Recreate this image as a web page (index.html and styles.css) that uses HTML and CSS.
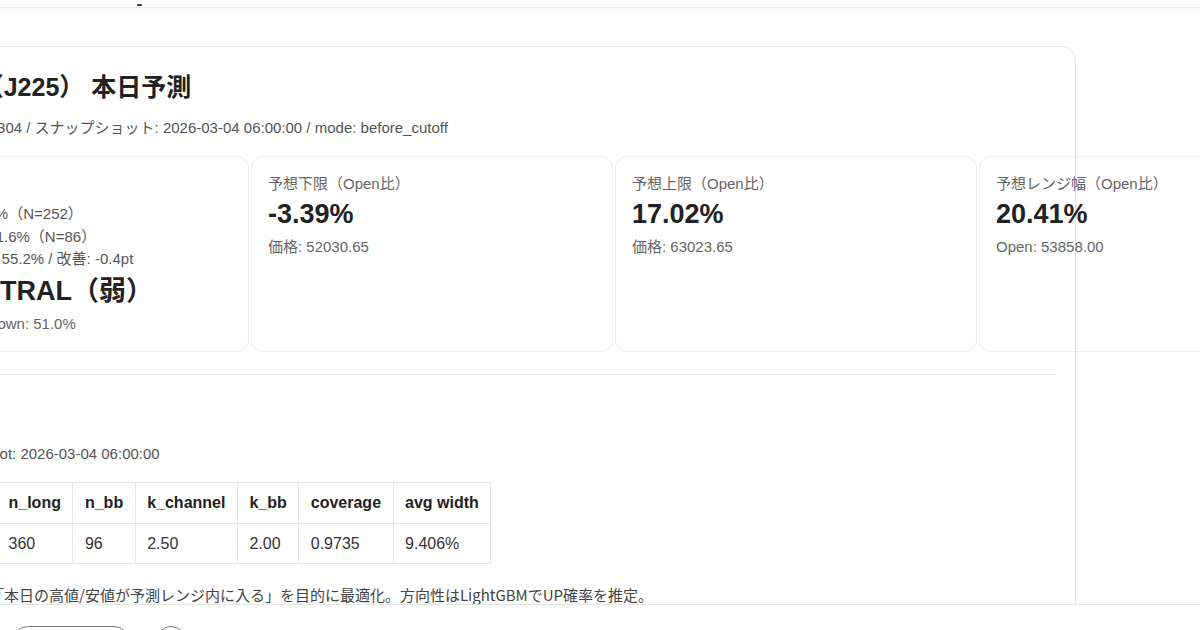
FILE: index.html
```html
<!DOCTYPE html>
<html lang="ja">
<head>
<meta charset="utf-8">
<title>本日予測</title>
<link rel="stylesheet" href="styles.css">
</head>
<body>
<header class="topbar"><span class="topbar-mark"></span></header>
<main class="card">
  <h1 class="title">日経225（J225） 本日予測</h1>
  <p class="meta">予測対象: 20260304 / スナップショット: 2026-03-04 06:00:00 / mode: before_cutoff</p>
  <div class="stats">
    <div class="stat">
      <div class="stat-label">方向予測</div>
      <div class="stat-lines">
        <div>的中率: 52.38%（N=252）</div>
        <div>直近一致率: 51.6%（N=86）</div>
        <div>ベースライン: 55.2% / 改善: -0.4pt</div>
      </div>
      <div class="stat-value stat-big"><span class="big-tag">判定</span>NEUTRAL（弱）</div>
      <div class="stat-sub stat-sub-tight">Up: 49.0% / Down: 51.0%</div>
    </div>
    <div class="stat">
      <div class="stat-label">予想下限（Open比）</div>
      <div class="stat-value">-3.39%</div>
      <div class="stat-sub">価格: 52030.65</div>
    </div>
    <div class="stat">
      <div class="stat-label">予想上限（Open比）</div>
      <div class="stat-value">17.02%</div>
      <div class="stat-sub">価格: 63023.65</div>
    </div>
    <div class="stat">
      <div class="stat-label">予想レンジ幅（Open比）</div>
      <div class="stat-value">20.41%</div>
      <div class="stat-sub">Open: 53858.00</div>
    </div>
  </div>
  <section class="section">
    <h2 class="section-title">レンジ最適化</h2>
    <p class="snap">最適化時 snapshot: 2026-03-04 06:00:00</p>
    <table class="params">
      <thead>
        <tr><th class="col-first">n_short</th><th>n_long</th><th>n_bb</th><th>k_channel</th><th>k_bb</th><th>coverage</th><th>avg width</th></tr>
      </thead>
      <tbody>
        <tr><td>60</td><td>360</td><td>96</td><td>2.50</td><td>2.00</td><td>0.9735</td><td>9.406%</td></tr>
      </tbody>
    </table>
    <p class="note">パラメータは、「本日の高値/安値が予測レンジ内に入る」を目的に最適化。方向性はLightGBMでUP確率を推定。</p>
  </section>
</main>
<footer class="actions">
  <button class="btn-pill" type="button">再読み込み</button>
  <button class="btn-round" type="button">?</button>
</footer>
</body>
</html>
```

FILE: styles.css
```css
* { box-sizing: border-box; }

html, body {
  margin: 0;
  overflow: hidden;
  background: #ffffff;
}

body {
  font-family: "Liberation Sans", "Noto Sans CJK JP", sans-serif;
  color: #222222;
}

.topbar {
  height: 8px;
  border-bottom: 1px solid #e9e9e9;
  box-shadow: 0 1px 2px rgba(0, 0, 0, 0.03);
  display: flex;
  align-items: flex-end;
  padding-left: 137px;
}

.topbar-mark {
  width: 5px;
  height: 2px;
  margin-bottom: 1px;
  border-radius: 1px;
  background: #333333;
}

.card {
  width: 1210px;
  margin: 38px 0 0 -134px;
  border: 1px solid #e3e3e3;
  border-radius: 14px;
  padding: 25px 20px 40px;
}

.title {
  margin: 0;
  font-size: 25px;
  line-height: 30px;
  font-weight: 700;
  color: #222222;
}

.meta {
  margin: 16px 0 0;
  font-size: 15px;
  line-height: 20px;
  color: #555555;
}

.stats {
  margin-top: 18px;
  display: grid;
  grid-template-columns: repeat(4, 362px);
  gap: 2px;
}

.stat {
  border: 1px solid #ececec;
  border-radius: 12px;
  padding: 17px 16px;
  font-size: 15px;
  color: #666666;
}

.stat-label {
  line-height: 20px;
  margin-bottom: 4px;
}

.stat-lines {
  margin-top: 9px;
  line-height: 22.5px;
  color: #555555;
}

.stat-value {
  font-size: 27px;
  line-height: 32px;
  font-weight: 700;
  color: #222222;
}

.stat-big {
  margin-top: 4.5px;
}

.big-tag {
  font-size: 15px;
  font-weight: 400;
  color: #666666;
  margin-right: 9px;
}

.stat-sub {
  margin-top: 7px;
  line-height: 20px;
}

.stat-sub-tight {
  margin-top: 3px;
}

.section {
  margin-top: 22px;
  border-top: 1px solid #ececec;
}

.section-title {
  margin: 20px 0 0;
  font-size: 16px;
  line-height: 24px;
  font-weight: 700;
}

.snap {
  margin: 24px 0 0;
  font-size: 15px;
  line-height: 22px;
  color: #555555;
}

.params {
  margin-top: 17px;
  border-collapse: collapse;
  font-size: 16px;
}

.params th,
.params td {
  border: 1px solid #e6e6e6;
  padding: 10px 11.5px;
  line-height: 19.5px;
  text-align: left;
  white-space: nowrap;
}

.params th {
  font-weight: 700;
  color: #222222;
}

.params td {
  color: #333333;
}

.params .col-first {
  width: 109px;
}

.note {
  margin: 20px 0 0 5px;
  font-family: "Noto Sans CJK JP", sans-serif;
  font-size: 15px;
  line-height: 22px;
  color: #444444;
}

.actions {
  position: fixed;
  left: 0;
  right: 0;
  bottom: 0;
  height: 26px;
  background: #ffffff;
  border-top: 1px solid #e6e6e6;
  box-shadow: 0 -1px 2px rgba(0, 0, 0, 0.03);
  display: flex;
  align-items: flex-start;
  gap: 26px;
  padding: 21px 0 0 12px;
}

.btn-pill {
  flex: none;
  width: 118px;
  height: 32px;
  border: 1px solid #777777;
  border-radius: 16px;
  background: #ffffff;
  font: 13px "Liberation Sans", "Noto Sans CJK JP", sans-serif;
  color: #333333;
}

.btn-round {
  flex: none;
  width: 30px;
  height: 30px;
  border: 1px solid #777777;
  border-radius: 50%;
  background: #ffffff;
  font: 13px "Liberation Sans", sans-serif;
  color: #333333;
}
```
